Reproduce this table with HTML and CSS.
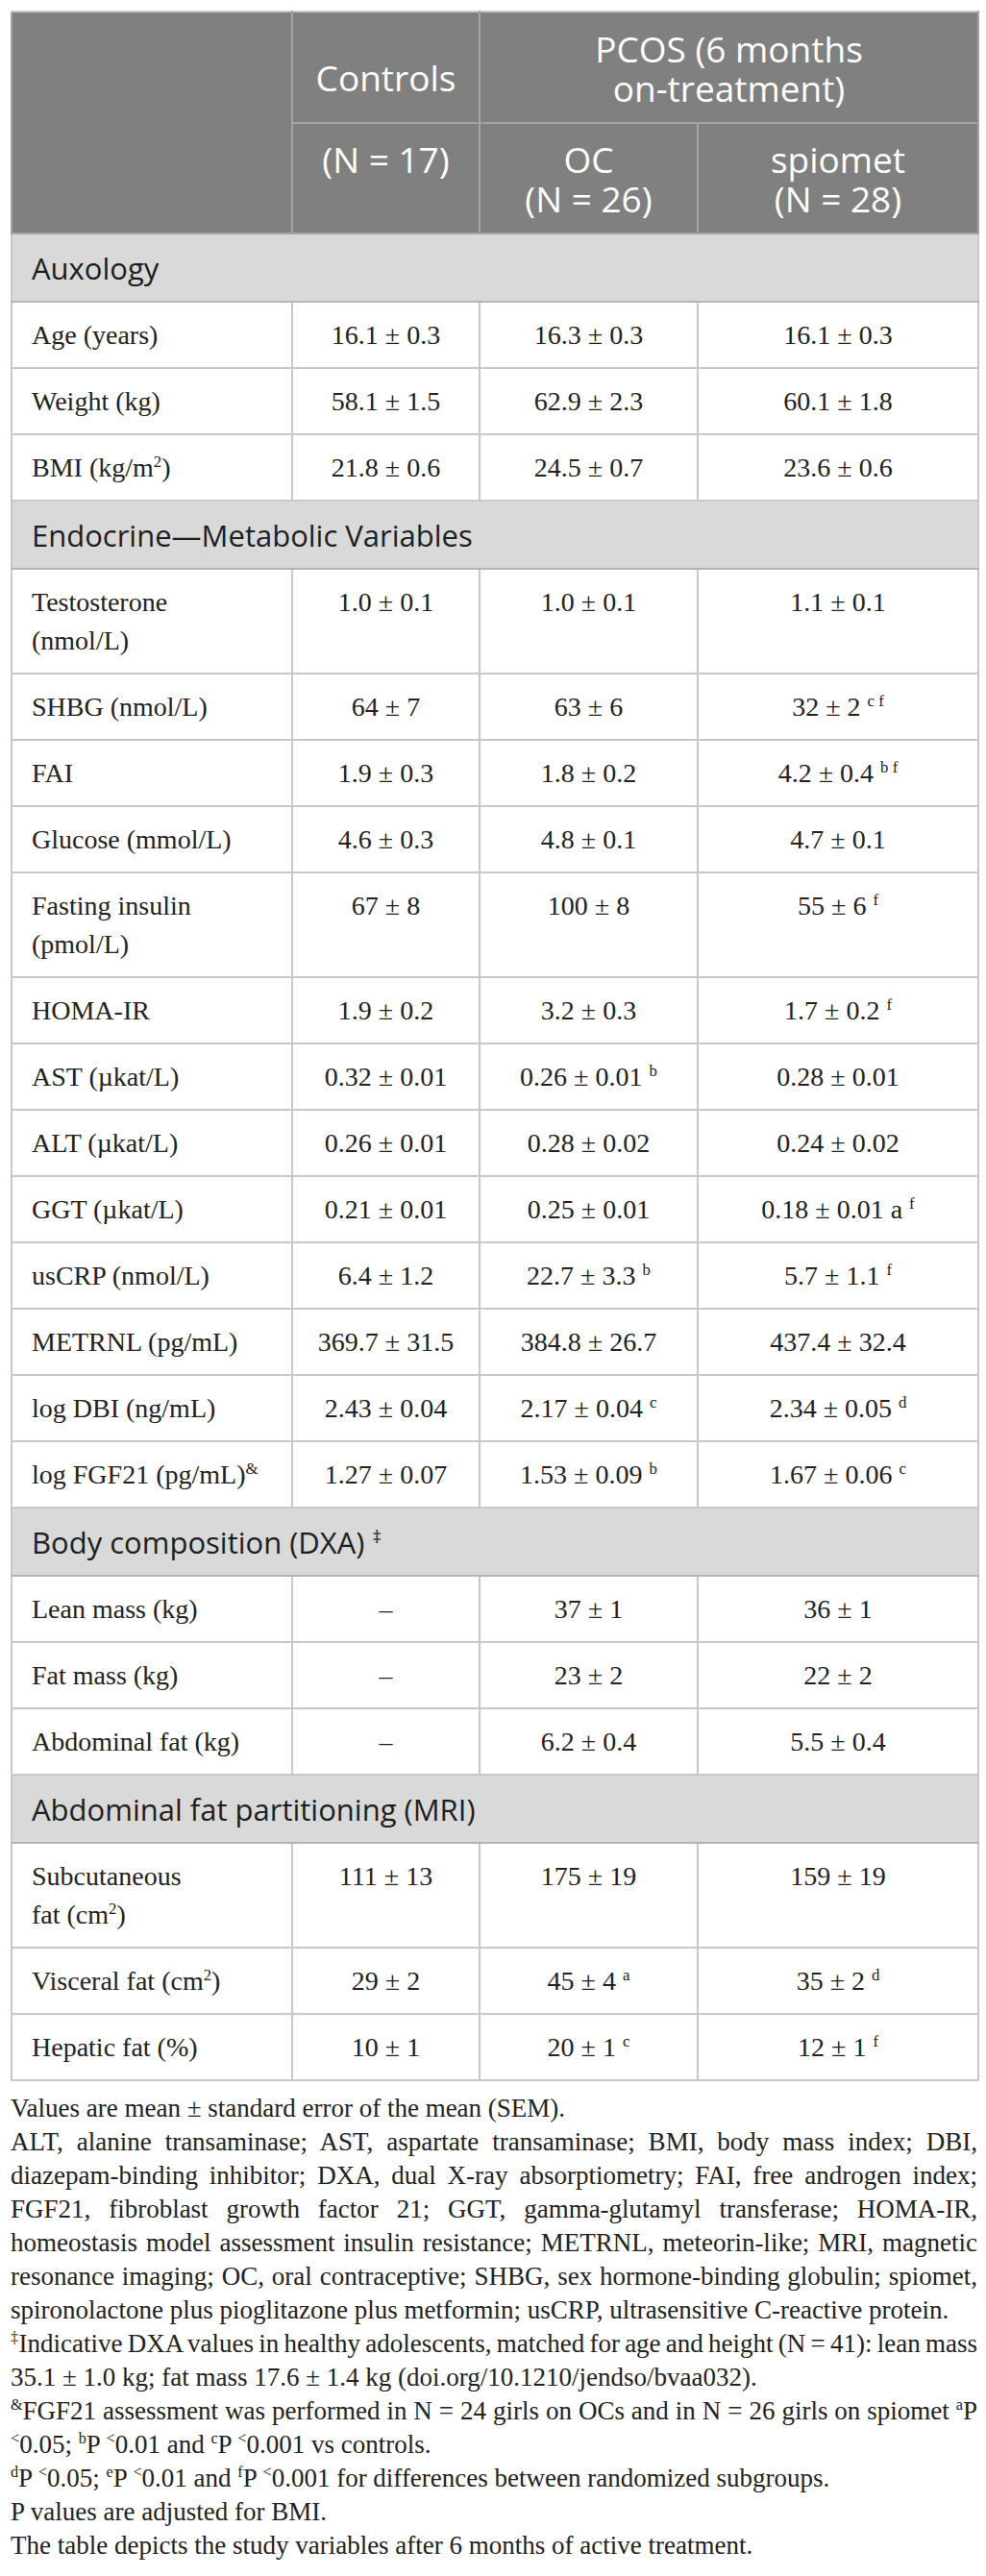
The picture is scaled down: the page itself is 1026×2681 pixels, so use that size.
FILE: index.html
```html
<!DOCTYPE html>
<html lang="en">
<head>
    <meta charset="UTF-8">
    <meta name="viewport" content="width=device-width, initial-scale=1.0">
    <title>Study variables after 6 months of treatment</title>
    <link rel="stylesheet" href="styles.css">
</head>
<body>
    <div class="page">
        <table class="tabla">
            <colgroup>
                <col class="c-label">
                <col class="c-ctl">
                <col class="c-oc">
                <col class="c-spio">
            </colgroup>
            <thead>
                <tr>
                    <th rowspan="2"></th>
                    <th class="controls">Controls</th>
                    <th colspan="2"><span class="ln">PCOS (6 months</span><span class="ln">on-treatment)</span></th>
                </tr>
                <tr>
                    <th>(N = 17)</th>
                    <th><span class="ln">OC</span><span class="ln">(N = 26)</span></th>
                    <th><span class="ln">spiomet</span><span class="ln">(N = 28)</span></th>
                </tr>
            </thead>
            <tbody>
                <tr class="seccion"><td colspan="4">Auxology</td></tr>
                <tr><td>Age (years)</td><td>16.1 ± 0.3</td><td>16.3 ± 0.3</td><td>16.1 ± 0.3</td></tr>
                <tr><td>Weight (kg)</td><td>58.1 ± 1.5</td><td>62.9 ± 2.3</td><td>60.1 ± 1.8</td></tr>
                <tr><td>BMI (kg/m<sup>2</sup>)</td><td>21.8 ± 0.6</td><td>24.5 ± 0.7</td><td>23.6 ± 0.6</td></tr>

                <tr class="seccion"><td colspan="4">Endocrine—Metabolic Variables</td></tr>
                <tr><td>Testosterone<br>(nmol/L)</td><td>1.0 ± 0.1</td><td>1.0 ± 0.1</td><td>1.1 ± 0.1</td></tr>
                <tr><td>SHBG (nmol/L)</td><td>64 ± 7</td><td>63 ± 6</td><td>32 ± 2 <sup>c f</sup></td></tr>
                <tr><td>FAI</td><td>1.9 ± 0.3</td><td>1.8 ± 0.2</td><td>4.2 ± 0.4 <sup>b f</sup></td></tr>
                <tr><td>Glucose (mmol/L)</td><td>4.6 ± 0.3</td><td>4.8 ± 0.1</td><td>4.7 ± 0.1</td></tr>
                <tr><td>Fasting insulin<br>(pmol/L)</td><td>67 ± 8</td><td>100 ± 8</td><td>55 ± 6 <sup>f</sup></td></tr>
                <tr><td>HOMA-IR</td><td>1.9 ± 0.2</td><td>3.2 ± 0.3</td><td>1.7 ± 0.2 <sup>f</sup></td></tr>
                <tr><td>AST (µkat/L)</td><td>0.32 ± 0.01</td><td>0.26 ± 0.01 <sup>b</sup></td><td>0.28 ± 0.01</td></tr>
                <tr><td>ALT (µkat/L)</td><td>0.26 ± 0.01</td><td>0.28 ± 0.02</td><td>0.24 ± 0.02</td></tr>
                <tr><td>GGT (µkat/L)</td><td>0.21 ± 0.01</td><td>0.25 ± 0.01</td><td>0.18 ± 0.01 a <sup>f</sup></td></tr>
                <tr><td>usCRP (nmol/L)</td><td>6.4 ± 1.2</td><td>22.7 ± 3.3 <sup>b</sup></td><td>5.7 ± 1.1 <sup>f</sup></td></tr>
                <tr><td>METRNL (pg/mL)</td><td>369.7 ± 31.5</td><td>384.8 ± 26.7</td><td>437.4 ± 32.4</td></tr>
                <tr><td>log DBI (ng/mL)</td><td>2.43 ± 0.04</td><td>2.17 ± 0.04 <sup>c</sup></td><td>2.34 ± 0.05 <sup>d</sup></td></tr>
                <tr><td>log FGF21 (pg/mL)<sup>&amp;</sup></td><td>1.27 ± 0.07</td><td>1.53 ± 0.09 <sup>b</sup></td><td>1.67 ± 0.06 <sup>c</sup></td></tr>

                <tr class="seccion"><td colspan="4">Body composition (DXA) <sup>‡</sup></td></tr>
                <tr><td>Lean mass (kg)</td><td>–</td><td>37 ± 1</td><td>36 ± 1</td></tr>
                <tr><td>Fat mass (kg)</td><td>–</td><td>23 ± 2</td><td>22 ± 2</td></tr>
                <tr><td>Abdominal fat (kg)</td><td>–</td><td>6.2 ± 0.4</td><td>5.5 ± 0.4</td></tr>

                <tr class="seccion"><td colspan="4">Abdominal fat partitioning (MRI)</td></tr>
                <tr><td>Subcutaneous<br>fat (cm<sup>2</sup>)</td><td>111 ± 13</td><td>175 ± 19</td><td>159 ± 19</td></tr>
                <tr><td>Visceral fat (cm<sup>2</sup>)</td><td>29 ± 2</td><td>45 ± 4 <sup>a</sup></td><td>35 ± 2 <sup>d</sup></td></tr>
                <tr><td>Hepatic fat (%)</td><td>10 ± 1</td><td>20 ± 1 <sup>c</sup></td><td>12 ± 1 <sup>f</sup></td></tr>
            </tbody>
        </table>

        <div class="notas">
            <p>Values are mean ± standard error of the mean (SEM).</p>
            <p>
                <span class="linea">ALT, alanine transaminase; AST, aspartate transaminase; BMI, body mass index; DBI,</span>
                <span class="linea">diazepam-binding inhibitor; DXA, dual X-ray absorptiometry; FAI, free androgen index;</span>
                <span class="linea">FGF21, fibroblast growth factor 21; GGT, gamma-glutamyl transferase; HOMA-IR,</span>
                <span class="linea">homeostasis model assessment insulin resistance; METRNL, meteorin-like; MRI, magnetic</span>
                <span class="linea">resonance imaging; OC, oral contraceptive; SHBG, sex hormone-binding globulin; spiomet,</span>
                <span>spironolactone plus pioglitazone plus metformin; usCRP, ultrasensitive C-reactive protein.</span>
            </p>
            <p>
                <span class="linea apretada"><sup>‡</sup>Indicative DXA values in healthy adolescents, matched for age and height (N = 41): lean mass</span>
                <span>35.1 ± 1.0 kg; fat mass 17.6 ± 1.4 kg (doi.org/10.1210/jendso/bvaa032).</span>
            </p>
            <p>
                <span class="linea"><sup>&amp;</sup>FGF21 assessment was performed in N = 24 girls on OCs and in N = 26 girls on spiomet <sup>a</sup>P</span>
                <span><sup>&lt;</sup>0.05; <sup>b</sup>P <sup>&lt;</sup>0.01 and <sup>c</sup>P <sup>&lt;</sup>0.001 vs controls.</span>
            </p>
            <p><sup>d</sup>P <sup>&lt;</sup>0.05; <sup>e</sup>P <sup>&lt;</sup>0.01 and <sup>f</sup>P <sup>&lt;</sup>0.001 for differences between randomized subgroups.</p>
            <p>P values are adjusted for BMI.</p>
            <p>The table depicts the study variables after 6 months of active treatment.</p>
        </div>
    </div>
</body>
</html>
```

FILE: styles.css
```css
* {
    margin: 0;
    padding: 0;
    box-sizing: border-box;
}

body {
    background: #fff;
    color: #222;
    font-family: 'Liberation Serif', 'Times New Roman', serif;
}

.page {
    padding: 11px 9px 0 11px;
}

.tabla {
    width: 1006px;
    border-collapse: collapse;
    table-layout: fixed;
}

.c-label { width: 292px; }
.c-ctl { width: 195px; }
.c-oc { width: 227px; }
.c-spio { width: 292px; }

.tabla th {
    background: #808080;
    color: #fff;
    font-family: 'Open Sans', 'Liberation Sans', sans-serif;
    font-weight: 400;
    font-size: 37px;
    line-height: 41px;
    text-align: center;
    vertical-align: top;
    padding: 17px 8px 15px;
    border: 2px solid #a3a3a3;
}

/* cada linea del encabezado en su propio bloque */
.tabla th .ln {
    display: block;
    height: 41px;
}

.tabla thead tr:first-child th {
    border-top-color: #c8c8c8;
}

.tabla thead tr:nth-child(2) th {
    padding: 16px 8px 15px;
}

.tabla th.controls {
    padding-top: 47px;
}

.tabla td {
    font-size: 28px;
    line-height: 40px;
    text-align: center;
    vertical-align: top;
    padding: 14px 6px 13px;
    border: 2px solid #c8c8c8;
}

.tabla td:first-child {
    text-align: left;
    padding-left: 20px;
}

.seccion td {
    background: #d9d9d9;
    font-family: 'Open Sans', 'Liberation Sans', sans-serif;
    font-size: 31px;
    color: #1e1e1e;
    padding-top: 15px;
    padding-bottom: 14px;
    border-bottom-color: #b4b4b4;
}

sup {
    font-size: 0.6em;
    line-height: 0;
    vertical-align: 0.6em;
}

.notas {
    width: 1006px;
    padding-top: 11px;
    font-size: 27px;
    line-height: 35px;
    color: #222;
}

.notas span {
    display: block;
}

.notas .linea {
    text-align: justify;
    text-align-last: justify;
}

.notas .apretada {
    word-spacing: -2px;
}
```
